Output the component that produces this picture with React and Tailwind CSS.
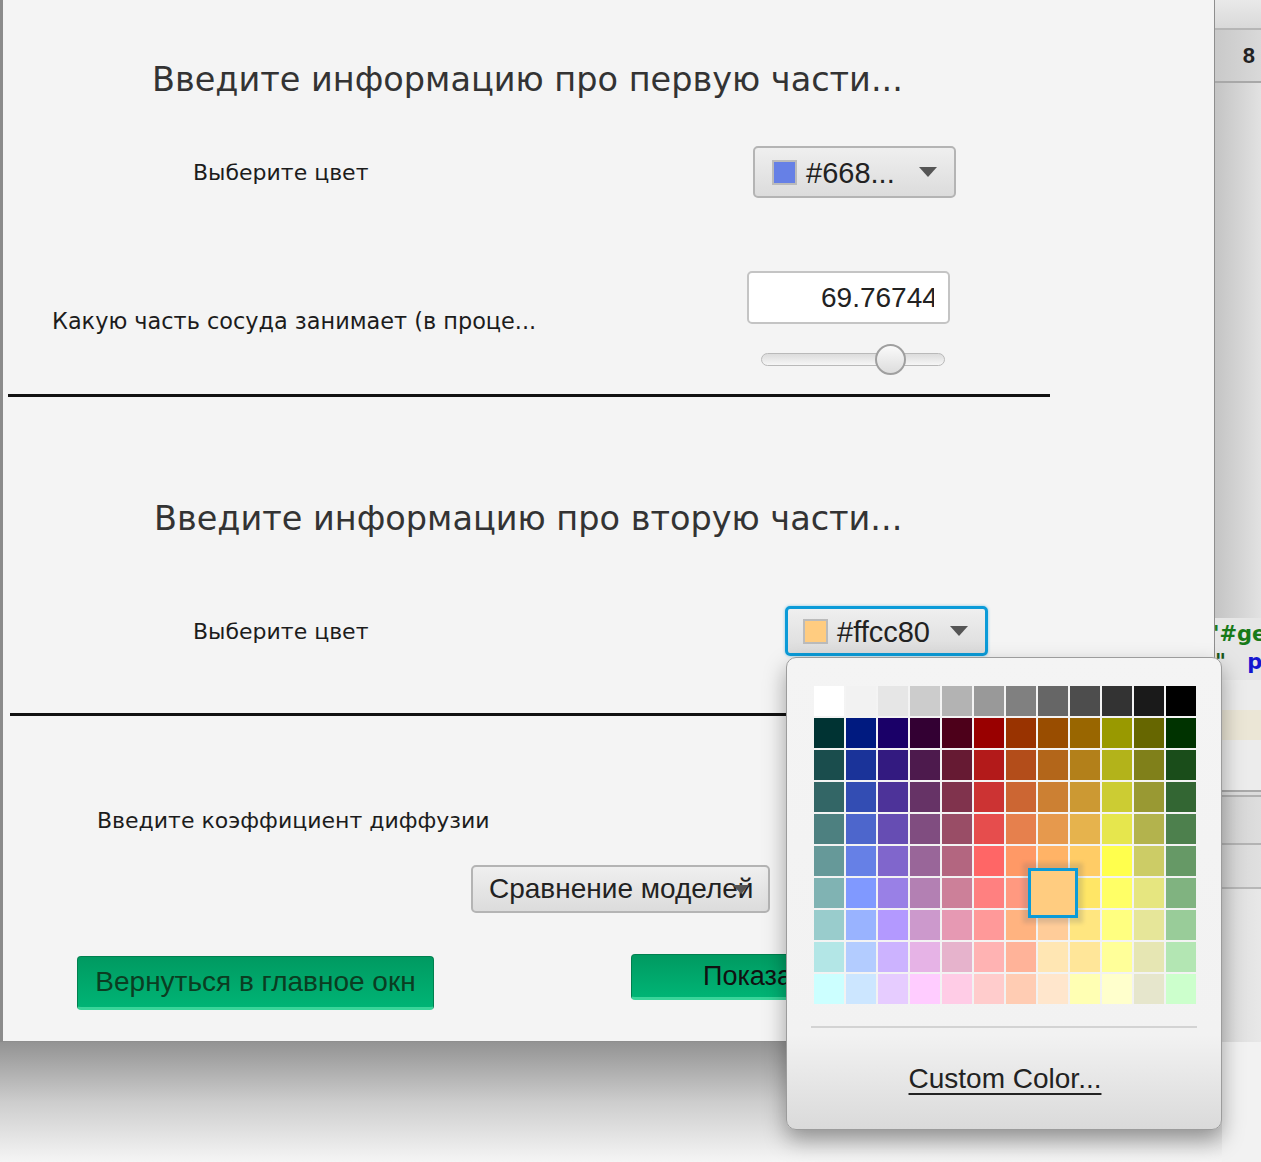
import React from 'react';

const PALETTE = [
  'bg-[#ffffff]', 'bg-[#f2f2f2]', 'bg-[#e6e6e6]', 'bg-[#cccccc]', 'bg-[#b3b3b3]', 'bg-[#999999]', 'bg-[#808080]', 'bg-[#666666]', 'bg-[#4d4d4d]', 'bg-[#333333]', 'bg-[#1a1a1a]', 'bg-[#000000]',
  'bg-[#003333]', 'bg-[#001a80]', 'bg-[#1a0068]', 'bg-[#330033]', 'bg-[#4d001a]', 'bg-[#990000]', 'bg-[#993300]', 'bg-[#994d00]', 'bg-[#996600]', 'bg-[#999900]', 'bg-[#666600]', 'bg-[#003300]',
  'bg-[#1a4d4d]', 'bg-[#1a3399]', 'bg-[#331a80]', 'bg-[#4d1a4d]', 'bg-[#661a33]', 'bg-[#b31a1a]', 'bg-[#b34d1a]', 'bg-[#b3661a]', 'bg-[#b3801a]', 'bg-[#b3b31a]', 'bg-[#80801a]', 'bg-[#1a4d1a]',
  'bg-[#336666]', 'bg-[#334db3]', 'bg-[#4d3399]', 'bg-[#663366]', 'bg-[#80334d]', 'bg-[#cc3333]', 'bg-[#cc6633]', 'bg-[#cc8033]', 'bg-[#cc9933]', 'bg-[#cccc33]', 'bg-[#999933]', 'bg-[#336633]',
  'bg-[#4d8080]', 'bg-[#4d66cc]', 'bg-[#664db3]', 'bg-[#804d80]', 'bg-[#994d66]', 'bg-[#e64d4d]', 'bg-[#e6804d]', 'bg-[#e6994d]', 'bg-[#e6b34d]', 'bg-[#e6e64d]', 'bg-[#b3b34d]', 'bg-[#4d804d]',
  'bg-[#669999]', 'bg-[#6680e6]', 'bg-[#8066cc]', 'bg-[#996699]', 'bg-[#b36680]', 'bg-[#ff6666]', 'bg-[#ff9966]', 'bg-[#ffb366]', 'bg-[#ffcc66]', 'bg-[#ffff4d]', 'bg-[#cccc66]', 'bg-[#669966]',
  'bg-[#80b3b3]', 'bg-[#8099ff]', 'bg-[#9980e6]', 'bg-[#b380b3]', 'bg-[#cc8099]', 'bg-[#ff8080]', 'bg-[#ff9980]', 'bg-[#ffcc80]', 'bg-[#ffe666]', 'bg-[#ffff66]', 'bg-[#e6e680]', 'bg-[#80b380]',
  'bg-[#99cccc]', 'bg-[#99b3ff]', 'bg-[#b399ff]', 'bg-[#cc99cc]', 'bg-[#e699b3]', 'bg-[#ff9999]', 'bg-[#ffb380]', 'bg-[#ffcc99]', 'bg-[#ffe680]', 'bg-[#ffff80]', 'bg-[#e6e699]', 'bg-[#99cc99]',
  'bg-[#b3e6e6]', 'bg-[#b3ccff]', 'bg-[#ccb3ff]', 'bg-[#e6b3e6]', 'bg-[#e6b3cc]', 'bg-[#ffb3b3]', 'bg-[#ffb399]', 'bg-[#ffe6b3]', 'bg-[#ffe699]', 'bg-[#ffff99]', 'bg-[#e6e6b3]', 'bg-[#b3e6b3]',
  'bg-[#ccffff]', 'bg-[#cce6ff]', 'bg-[#e6ccff]', 'bg-[#ffccff]', 'bg-[#ffcce6]', 'bg-[#ffcccc]', 'bg-[#ffccb3]', 'bg-[#ffe6cc]', 'bg-[#ffffb3]', 'bg-[#ffffcc]', 'bg-[#e6e6cc]', 'bg-[#ccffcc]',
];

const Arrow = () => (
  <svg width="18" height="10" viewBox="0 0 18 10" className="shrink-0">
    <path d="M0 0 L18 0 L9 10 Z" fill="#555" />
  </svg>
);

const ColorPicker = ({ swatch, label, focused }) => (
  <div
    className={`w-[203px] flex items-center rounded-[5px] bg-gradient-to-b from-[#efefef] to-[#dcdcdc] pr-[17px] ${
      focused
        ? 'h-[50px] border-[3px] border-[#0b9bd8] pl-[15px] shadow-[0_0_3px_rgba(11,155,216,0.5)]'
        : 'h-[52px] border-2 border-[#b4b4b4] pl-[17px]'
    }`}
  >
    <span className={`w-[25px] h-[25px] border-2 border-[#bbbbbb] shrink-0 ${swatch}`} />
    <span className="ml-[9px] flex-1 text-[29px] leading-none text-[#222] pt-[2px]">{label}</span>
    <Arrow />
  </div>
);

const Slider = () => (
  <div className="relative ml-[14px] mt-[29px] w-[184px] h-[13px] rounded-full border border-[#b9b9b9] bg-gradient-to-b from-[#dcdcdc] to-[#f6f6f6]">
    <div className="absolute left-[113px] top-[-10px] w-[31px] h-[31px] rounded-full border-2 border-[#9f9f9f] bg-gradient-to-b from-[#fafafa] to-[#dddddd]" />
  </div>
);

const Popup = () => (
  <div className="absolute left-[786px] top-[657px] w-[436px] h-[473px] rounded-[10px] border border-[#9c9c9c] bg-[linear-gradient(to_bottom,#f4f4f4_0%,#f2f2f2_80%,#dadada_100%)] shadow-[0_10px_22px_rgba(0,0,0,0.35)] pt-[28px] pl-[27px]">
    <div className="relative w-[382px]">
      <div className="grid grid-cols-[repeat(12,30px)] gap-[2px]">
        {PALETTE.map((c, i) => (
          <div key={i} className={`h-[30px] ${c}`} />
        ))}
      </div>
      {/* selected swatch */}
      <div className="absolute left-[214px] top-[182px] w-[50px] h-[50px] border-[3px] border-[#0b9bd8] bg-[#ffcc80] shadow-[0_0_4px_5px_rgba(110,110,110,0.22)]" />
    </div>
    <div className="ml-[-3px] mt-[22px] w-[386px] h-[2px] bg-[#d3d3d3]" />
    <div className="mt-[35px] ml-[-27px] w-[436px] text-center text-[28px] leading-[32px] text-[#222]">
      <span className="underline underline-offset-[5px] decoration-[2px]">Custom Color...</span>
    </div>
  </div>
);

const BackgroundStrip = () => (
  <div className="w-[46px] flex flex-col overflow-hidden">
    <div className="h-[30px] bg-gradient-to-b from-[#e9e9e9] to-[#d9d9d9] border-b-2 border-[#b6b6b6]" />
    <div className="h-[53px] bg-gradient-to-r from-[#c9c9c9] to-[#d9d9d9] border-b-2 border-[#a8a8a8] flex items-center justify-end pr-[6px] text-[22px] font-bold text-[#222]">
      8
    </div>
    <div className="h-[535px] bg-gradient-to-r from-[#c4c4c4] to-[#e2e2e2]" />
    <div className="h-[62px] bg-[#e6e6e6] font-['DejaVu_Sans',sans-serif] text-[21px] font-bold leading-[28px] whitespace-pre pt-[2px]">
      <div className="text-[#187a18] ml-[-2px]">'#ge</div>
      <div className="text-[#1a5a1a]">
        {'" '}
        <span className="text-[#1515d0] ml-[14px]">p</span>
      </div>
    </div>
    <div className="h-[30px] bg-[#ececec]" />
    <div className="h-[30px] bg-[#ebe6d6]" />
    <div className="h-[52px] bg-[#ececec] border-b-2 border-[#a9a9a9]" />
    <div className="h-[5px] bg-[#dcdcdc] border-b-2 border-[#b0b0b0]" />
    <div className="h-[48px] bg-gradient-to-r from-[#cfcfcf] to-[#dedede] border-b-2 border-[#b3b3b3]" />
    <div className="h-[44px] bg-gradient-to-r from-[#d3d3d3] to-[#e0e0e0] border-b-2 border-[#b7b7b7]" />
    <div className="flex-1 bg-gradient-to-r from-[#d9d9d9] to-[#e8e8e8]" />
  </div>
);

export default function App() {
  return (
    <div className="relative w-[1261px] h-[1162px] overflow-hidden bg-[#f3f3f3] font-['Liberation_Sans',Arial,sans-serif]">
      <div className="flex h-[1042px]">
        <div className="w-[3px] bg-[#8b8b8b]" />

        {/* window */}
        <div className="w-[1212px] bg-[#f4f4f4] border-r border-b border-[#8e8e8e] flex flex-col">
          <div className="mt-[55px] h-[50px] flex items-center pl-[149px] font-['DejaVu_Sans',sans-serif] text-[33.5px] text-[#333]">
            Введите информацию про первую части...
          </div>

          <div className="mt-[41px] h-[52px] flex items-center">
            <div className="w-[750px] pl-[190px] font-['DejaVu_Sans',sans-serif] text-[22px] text-[#1c1c1c]">Выберите цвет</div>
            <ColorPicker swatch="bg-[#6680e6]" label="#668..." />
          </div>

          <div className="mt-[73px] flex">
            <div className="w-[744px] pl-[49px] pt-[36px] font-['DejaVu_Sans',sans-serif] text-[22.4px] leading-[28px] text-[#1c1c1c]">
              Какую часть сосуда занимает (в проце...
            </div>
            <div className="w-[203px] flex flex-col">
              <div className="h-[53px] rounded-[5px] border-2 border-[#c4c4c4] bg-white flex items-center pl-[72px]">
                <div className="w-[113px] overflow-hidden whitespace-nowrap text-[28px] text-[#222]">69.76744186</div>
              </div>
              <Slider />
            </div>
          </div>

          <div className="mt-[28px] ml-[5px] w-[1042px] h-[3px] bg-[#111]" />

          <div className="mt-[97px] h-[50px] flex items-center pl-[151px] font-['DejaVu_Sans',sans-serif] text-[33.5px] text-[#333]">
            Введите информацию про вторую части...
          </div>

          <div className="mt-[62px] h-[50px] flex items-center">
            <div className="w-[782px] pl-[190px] font-['DejaVu_Sans',sans-serif] text-[22px] text-[#1c1c1c]">Выберите цвет</div>
            <ColorPicker swatch="bg-[#ffcc80]" label="#ffcc80" focused />
          </div>

          <div className="mt-[57px] ml-[7px] w-[1040px] h-[3px] bg-[#111]" />

          <div className="mt-[90px] h-[28px] flex items-center pl-[94px] font-['DejaVu_Sans',sans-serif] text-[22px] text-[#1c1c1c]">
            Введите коэффициент диффузии
          </div>

          <div className="mt-[31px] ml-[468px] w-[299px] h-[48px] rounded-[5px] border-2 border-[#b4b4b4] bg-gradient-to-b from-[#efefef] to-[#dcdcdc] flex items-center pl-[16px] relative">
            <span className="text-[28px] text-[#222]">Сравнение моделей</span>
            <span className="absolute right-[19px] top-[18px]">
              <svg width="16" height="9" viewBox="0 0 16 9">
                <path d="M0 0 L16 0 L8 9 Z" fill="#555" />
              </svg>
            </span>
          </div>

          <div className="mt-[41px] flex items-start">
            <div className="ml-[74px] mt-[2px] w-[357px] h-[54px] rounded-[4px] border border-[#00804f] border-b-[3px] border-b-[#3ad59a] bg-gradient-to-b from-[#009a61] to-[#00b475] flex items-center justify-center overflow-hidden">
              <span className="text-[28px] text-[#0b3d22] whitespace-nowrap">Вернуться в главное окн</span>
            </div>
            <div className="ml-[197px] w-[300px] h-[46px] rounded-[4px] border border-[#00804f] border-b-[3px] border-b-[#3ad59a] bg-gradient-to-b from-[#009a61] to-[#00b475] flex items-center pl-[71px] overflow-hidden">
              <span className="text-[27px] text-[#111] whitespace-nowrap">Показать графики</span>
            </div>
          </div>
        </div>

        <BackgroundStrip />
      </div>

      {/* shadow under the window */}
      <div className="flex h-[120px]">
        <div className="w-[1222px] bg-gradient-to-b from-[#939393] via-[#cdcdcd] to-[#f5f5f5]" />
        <div className="flex-1 bg-[#f2f2f2]" />
      </div>

      <Popup />
    </div>
  );
}
